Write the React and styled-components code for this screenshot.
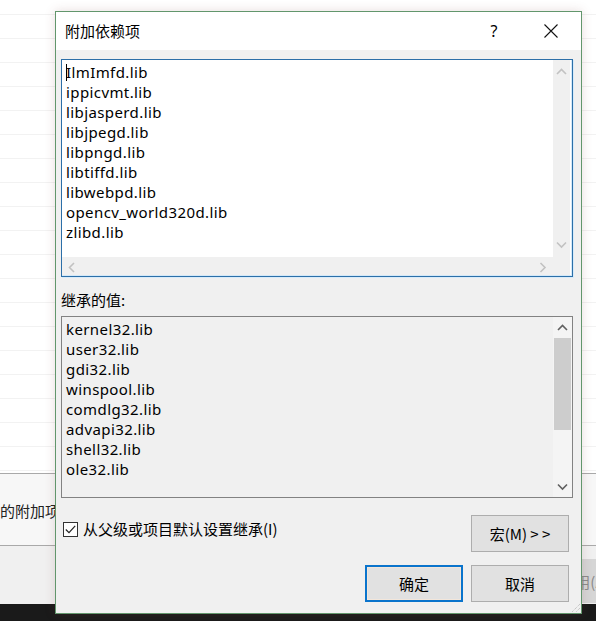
import React from "react";
import styled, { createGlobalStyle } from "styled-components";

const GlobalStyle = createGlobalStyle`
	html, body {
		margin: 0;
		padding: 0;
		background: #fff;
		overflow: hidden;
	}
	body {
		font-family: "Noto Sans", "Noto Sans CJK SC", sans-serif;
		font-size: 15px;
		color: #000;
	}
`;

const Page = styled.div`
	position: relative;
	width: 596px;
	height: 621px;
	overflow: hidden;
	display: flex;
	flex-direction: column;
	background: #fff;
`;

const BackRows = styled.div`
	height: 473px;
	padding-top: 14px;
	box-sizing: border-box;
	overflow: hidden;
`;

const BackRow = styled.div`
	height: 24px;
	border-top: 1px solid #f2f2f2;
	box-sizing: border-box;
`;

const BackBand = styled.div`
	height: 73px;
	box-sizing: border-box;
	border-top: 1px solid #a9a9a9;
	border-bottom: 1px solid #a9a9a9;
	background: #f7f7f7;
	display: flex;
	align-items: center;
	font-family: "Noto Sans CJK SC", sans-serif;
	font-size: 15px;
	color: #222;
	white-space: nowrap;
	padding-top: 2px;
`;

const BackFooter = styled.div`
	height: 58px;
	background: #f0f0f0;
	display: flex;
	justify-content: flex-end;
	align-items: flex-end;
	padding-bottom: 1px;
	box-sizing: border-box;
`;

const BackButton = styled.div`
	width: 90px;
	height: 44px;
	margin-right: -34px;
	background: #d6d6d6;
	display: flex;
	align-items: center;
	justify-content: center;
	font-family: "Noto Sans CJK SC", sans-serif;
	color: #8a8a8a;
`;

const Taskbar = styled.div`
	flex: 1;
	background: #1a1a1a;
`;

const Dialog = styled.div`
	position: absolute;
	left: 55px;
	top: 11px;
	width: 527px;
	height: 603px;
	box-sizing: border-box;
	border: 1px solid #62966c;
	background: #f0f0f0;
	display: flex;
	flex-direction: column;
	box-shadow: 0 0 10px rgba(120, 60, 60, 0.18);
`;

const TitleBar = styled.div`
	height: 38px;
	background: #fff;
	display: flex;
	align-items: center;
	padding-left: 9px;
	font-family: "Noto Sans CJK SC", sans-serif;
	font-size: 15px;
`;

const Title = styled.div`
	flex: 1;
	padding-bottom: 1px;
`;

const TitleButton = styled.div`
	width: ${(p) => p.w}px;
	height: 38px;
	display: flex;
	align-items: center;
	justify-content: center;
	font-family: "Noto Sans", sans-serif;
	font-size: 16px;
	margin-right: ${(p) => p.mr || 0}px;
`;

const Body = styled.div`
	flex: 1;
	padding: 9px 8px 11px 5px;
	display: flex;
	flex-direction: column;
`;

const ListBox = styled.div`
	height: ${(p) => p.h}px;
	box-sizing: border-box;
	border: 1px solid ${(p) => (p.focused ? "#2c6fa8" : "#828282")};
	background: ${(p) => (p.focused ? "#fff" : "#f0f0f0")};
	box-shadow: ${(p) =>
		p.focused ? "inset -1px -1px 0 #d3e8f8, 1px 1px 0 #d8ebf9" : "none"};
	display: grid;
	grid-template-columns: 1fr 19px;
	grid-template-rows: ${(p) => (p.hscroll ? "1fr 19px" : "1fr")};
	overflow: hidden;
`;

const Lines = styled.div`
	padding: 2px 4px;
	line-height: 20px;
	font-family: "Noto Sans", sans-serif;
	font-size: 15px;
	letter-spacing: 0.4px;
	color: #000;
	overflow: hidden;
`;

const Line = styled.div`
	white-space: nowrap;
	display: flex;
	align-items: center;
`;

const Caret = styled.span`
	display: inline-block;
	width: 1px;
	height: 17px;
	background: #000;
	margin-right: -1px;
`;

const VScroll = styled.div`
	background: ${(p) => (p.light ? "#f0f0f0" : "#f4f4f4")};
	display: flex;
	flex-direction: column;
	margin-right: ${(p) => (p.light ? 2 : 0)}px;
`;

const ArrowBtn = styled.div`
	height: ${(p) => p.h || 21}px;
	width: ${(p) => p.w || "auto"};
	display: flex;
	align-items: center;
	justify-content: center;
`;

const Track = styled.div`
	flex: 1;
	padding: 0 1px;
`;

const Thumb = styled.div`
	height: ${(p) => p.h}px;
	background: #cdcdcd;
`;

const HScroll = styled.div`
	background: #f0f0f0;
	display: flex;
	justify-content: space-between;
	margin-bottom: 1px;
`;

const Corner = styled.div`
	background: #f0f0f0;
	margin: 0 2px 1px 0;
`;

const Label = styled.div`
	margin-top: 13px;
	margin-bottom: 6px;
	line-height: 20px;
	font-family: "Noto Sans CJK SC", sans-serif;
	font-size: 15px;
`;

const Row = styled.div`
	display: flex;
	align-items: flex-start;
	justify-content: ${(p) => p.justify || "space-between"};
	gap: 8px;
	margin-top: ${(p) => p.mt}px;
	padding-right: 4px;
`;

const CheckLabel = styled.label`
	display: flex;
	align-items: center;
	gap: 5px;
	margin-top: 6px;
	margin-left: 2px;
	font-family: "Noto Sans CJK SC", sans-serif;
	font-size: 15px;
	line-height: 16px;
`;

const CheckBox = styled.span`
	width: 15px;
	height: 15px;
	box-sizing: border-box;
	border: 1px solid #333;
	background: #fff;
	display: flex;
	align-items: center;
	justify-content: center;
`;

const Button = styled.div`
	width: 98px;
	height: 37px;
	box-sizing: border-box;
	border: ${(p) => (p.primary ? "2px solid #0a74cc" : "1px solid #adadad")};
	background: #e1e1e1;
	box-shadow: ${(p) => (p.primary ? "inset 0 0 0 1px #f3e6da" : "none")};
	display: flex;
	align-items: center;
	justify-content: center;
	font-family: "Noto Sans CJK SC", sans-serif;
	font-size: 15px;
	padding-bottom: 1px;
	white-space: pre;
`;

const Grip = styled.svg`
	position: absolute;
	right: 0;
	bottom: 0;
`;

const Chevron = ({ dir, color }) => {
	const paths = {
		up: "M1 6 L5.5 1.5 L10 6",
		down: "M1 1.5 L5.5 6 L10 1.5",
		left: "M6 1 L1.5 5.5 L6 10",
		right: "M1.5 1 L6 5.5 L1.5 10",
	};
	const vertical = dir === "up" || dir === "down";
	return (
		<svg
			width={vertical ? 11 : 8}
			height={vertical ? 8 : 11}
			viewBox={vertical ? "0 0 11 8" : "0 0 8 11"}
		>
			<path d={paths[dir]} fill="none" stroke={color} strokeWidth="1.6" />
		</svg>
	);
};

const ownLibs = [
	"IlmImfd.lib",
	"ippicvmt.lib",
	"libjasperd.lib",
	"libjpegd.lib",
	"libpngd.lib",
	"libtiffd.lib",
	"libwebpd.lib",
	"opencv_world320d.lib",
	"zlibd.lib",
];

const inheritedLibs = [
	"kernel32.lib",
	"user32.lib",
	"gdi32.lib",
	"winspool.lib",
	"comdlg32.lib",
	"advapi32.lib",
	"shell32.lib",
	"ole32.lib",
];

export default function App() {
	return (
		<>
			<GlobalStyle />
			<Page>
				<BackRows>
					{Array.from({ length: 20 }).map((_, i) => (
						<BackRow key={i} />
					))}
				</BackRows>
				<BackBand>的附加项[</BackBand>
				<BackFooter>
					<BackButton>应用(A)</BackButton>
				</BackFooter>
				<Taskbar />

				<Dialog>
					<TitleBar>
						<Title>附加依赖项</Title>
						<TitleButton w={46} mr={11}>?</TitleButton>
						<TitleButton w={46} mr={7}>
							<svg width="14" height="14" viewBox="0 0 14 14">
								<path d="M0.5 0.5 L13.5 13.5 M13.5 0.5 L0.5 13.5" stroke="#111" strokeWidth="1.1" />
							</svg>
						</TitleButton>
					</TitleBar>

					<Body>
						<ListBox h={218} focused hscroll>
							<Lines>
								{ownLibs.map((lib, i) => (
									<Line key={lib}>
										{i === 0 && <Caret />}
										{lib}
									</Line>
								))}
							</Lines>
							<VScroll light>
								<ArrowBtn h={24}>
									<Chevron dir="up" color="#c2c2c2" />
								</ArrowBtn>
								<Track />
								<ArrowBtn h={24}>
									<Chevron dir="down" color="#c2c2c2" />
								</ArrowBtn>
							</VScroll>
							<HScroll>
								<ArrowBtn w="20px">
									<Chevron dir="left" color="#c2c2c2" />
								</ArrowBtn>
								<ArrowBtn w="20px">
									<Chevron dir="right" color="#c2c2c2" />
								</ArrowBtn>
							</HScroll>
							<Corner />
						</ListBox>

						<Label>继承的值:</Label>

						<ListBox h={182}>
							<Lines>
								{inheritedLibs.map((lib) => (
									<Line key={lib}>{lib}</Line>
								))}
							</Lines>
							<VScroll>
								<ArrowBtn>
									<Chevron dir="up" color="#606060" />
								</ArrowBtn>
								<Track>
									<Thumb h={92} />
								</Track>
								<ArrowBtn>
									<Chevron dir="down" color="#606060" />
								</ArrowBtn>
							</VScroll>
						</ListBox>

						<Row mt={17}>
							<CheckLabel>
								<CheckBox>
									<svg width="11" height="9" viewBox="0 0 11 9">
										<path d="M0.8 4.5 L4 7.6 L10.2 0.8" fill="none" stroke="#222" strokeWidth="1.2" />
									</svg>
								</CheckBox>
								从父级或项目默认设置继承(I)
							</CheckLabel>
							<Button>宏(M) &gt; &gt;</Button>
						</Row>

						<Row mt={13} justify="flex-end">
							<Button primary>确定</Button>
							<Button>取消</Button>
						</Row>
					</Body>

					<Grip width="12" height="12" viewBox="0 0 12 12">
						<path d="M11 3 L3 11 M11 7 L7 11" stroke="#b5b5b5" strokeWidth="1" strokeDasharray="1 1" />
					</Grip>
				</Dialog>
			</Page>
		</>
	);
}
